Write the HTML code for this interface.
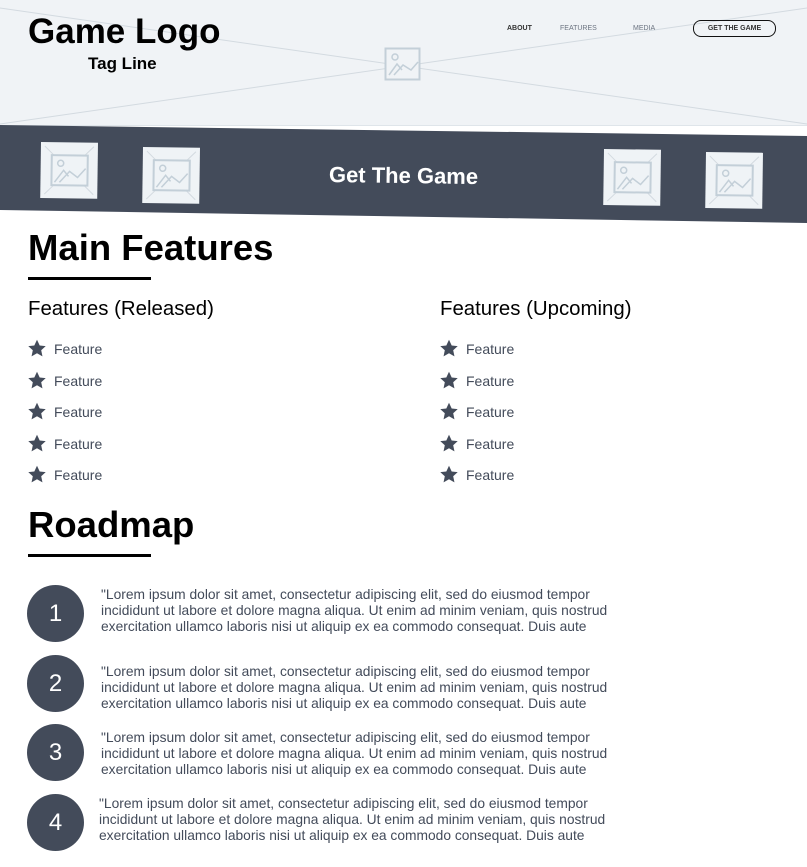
<!DOCTYPE html>
<html><head><meta charset="utf-8">
<style>
*{margin:0;padding:0;box-sizing:border-box}
body{width:807px;height:867px;overflow:hidden;background:#fff;font-family:"Liberation Sans",sans-serif;position:relative}
.a{position:absolute}
.hdr{left:0;top:0;width:807px;height:126px;background:#f0f3f6;border-bottom:1px solid #dfe5ea}
.nav{font-size:7px;top:25px;color:#6b7380}
.btn{left:693px;top:20px;width:83px;height:17px;border:1.5px solid #111;border-radius:8px;font-size:7px;font-weight:bold;color:#333;text-align:center;line-height:15px}
.h1{font-size:36.5px;font-weight:bold;color:#000;left:28px}
.ul{left:28px;width:123px;height:3px;background:#000}
.h2{font-size:20.4px;color:#000}
.f{font-size:14px;color:#434b5a;height:20px;line-height:20px}
.f svg{position:absolute;left:-27px;top:0px}
.c{left:27px;width:57px;height:57px;border-radius:50%;background:#434b5a;color:#fff;font-size:24px;text-align:center;line-height:57px}
.t{left:101px;font-size:13.8px;line-height:16px;color:#434b5a;width:560px;white-space:nowrap}
</style></head><body>
<div class="a hdr"></div>
<svg class="a" style="left:0;top:0" width="807" height="126"><line x1="0" y1="8" x2="807" y2="124" stroke="#d3dae0" stroke-width="1"/><line x1="807" y1="8" x2="0" y2="124" stroke="#d3dae0" stroke-width="1"/>
<rect x="385.5" y="48.5" width="34" height="31" fill="#f0f3f6" stroke="#c3cfd8" stroke-width="2"/><circle cx="395" cy="57" r="3" fill="none" stroke="#c3cfd8" stroke-width="1.5"/><polyline points="389,75 397,64 402,70" fill="none" stroke="#c3cfd8" stroke-width="1.5"/><polyline points="394,75 403,65 411,70 418,62" fill="none" stroke="#c3cfd8" stroke-width="1.5"/></svg>
<div class="a" style="left:28px;top:12px;font-size:35px;font-weight:bold;color:#000">Game Logo</div>
<div class="a" style="left:88px;top:54px;font-size:17px;font-weight:bold;color:#000">Tag Line</div>
<div class="a nav" style="left:507px;color:#333;font-weight:bold">ABOUT</div>
<div class="a nav" style="left:560px">FEATURES</div>
<div class="a nav" style="left:633px">MEDIA</div>
<div class="a btn">GET THE GAME</div>
<svg class="a" style="left:0;top:120px" width="807" height="110"><polygon points="0,5 807,16 807,103 0,90" fill="#434b5a"/></svg>
<svg class="a" style="left:0;top:0" width="807" height="230">
<defs><g id="p"><rect x="0" y="0" width="57" height="56" fill="#eff3f6"/><line x1="4" y1="4" x2="53" y2="52" stroke="#d3dae0"/><line x1="53" y1="4" x2="4" y2="52" stroke="#d3dae0"/><rect x="11" y="13" width="36" height="30" fill="#eff3f6" stroke="#c3cfd8" stroke-width="2"/><circle cx="20" cy="21" r="3" fill="none" stroke="#c3cfd8" stroke-width="1.5"/><polyline points="14,40 23,28 28,34" fill="none" stroke="#c3cfd8" stroke-width="1.5"/><polyline points="19,40 29,29 37,35 45,26" fill="none" stroke="#c3cfd8" stroke-width="1.5"/></g></defs>
<use href="#p" transform="translate(41,142) rotate(0.8)"/>
<use href="#p" transform="translate(143,147) rotate(0.8)"/>
<use href="#p" transform="translate(604,149) rotate(0.8)"/>
<use href="#p" transform="translate(706,152) rotate(0.8)"/>
</svg>
<div class="a" style="left:0;width:807px;top:163px;text-align:center;font-size:22px;font-weight:bold;color:#fff;transform:rotate(0.8deg)">Get The Game</div>
<div class="a h1" style="top:227px">Main Features</div>
<div class="a ul" style="top:277px"></div>
<div class="a h2" style="left:28px;top:298px">Features (Released)</div>
<div class="a h2" style="left:440px;top:298px">Features (Upcoming)</div>
<div class="a" style="left:54px;top:339px">
<div class="a f" style="top:0"><svg width="20" height="19" viewBox="0 0 24 24"><path d="M12 1l3.4 7.2 7.6.8-5.7 5.2 1.6 7.8L12 18l-6.9 4 1.6-7.8L1 9l7.6-.8z" fill="#434b5a"/></svg>Feature</div>
<div class="a f" style="top:32px"><svg width="20" height="19" viewBox="0 0 24 24"><path d="M12 1l3.4 7.2 7.6.8-5.7 5.2 1.6 7.8L12 18l-6.9 4 1.6-7.8L1 9l7.6-.8z" fill="#434b5a"/></svg>Feature</div>
<div class="a f" style="top:63px"><svg width="20" height="19" viewBox="0 0 24 24"><path d="M12 1l3.4 7.2 7.6.8-5.7 5.2 1.6 7.8L12 18l-6.9 4 1.6-7.8L1 9l7.6-.8z" fill="#434b5a"/></svg>Feature</div>
<div class="a f" style="top:95px"><svg width="20" height="19" viewBox="0 0 24 24"><path d="M12 1l3.4 7.2 7.6.8-5.7 5.2 1.6 7.8L12 18l-6.9 4 1.6-7.8L1 9l7.6-.8z" fill="#434b5a"/></svg>Feature</div>
<div class="a f" style="top:126px"><svg width="20" height="19" viewBox="0 0 24 24"><path d="M12 1l3.4 7.2 7.6.8-5.7 5.2 1.6 7.8L12 18l-6.9 4 1.6-7.8L1 9l7.6-.8z" fill="#434b5a"/></svg>Feature</div>
</div>
<div class="a" style="left:466px;top:339px">
<div class="a f" style="top:0"><svg width="20" height="19" viewBox="0 0 24 24"><path d="M12 1l3.4 7.2 7.6.8-5.7 5.2 1.6 7.8L12 18l-6.9 4 1.6-7.8L1 9l7.6-.8z" fill="#434b5a"/></svg>Feature</div>
<div class="a f" style="top:32px"><svg width="20" height="19" viewBox="0 0 24 24"><path d="M12 1l3.4 7.2 7.6.8-5.7 5.2 1.6 7.8L12 18l-6.9 4 1.6-7.8L1 9l7.6-.8z" fill="#434b5a"/></svg>Feature</div>
<div class="a f" style="top:63px"><svg width="20" height="19" viewBox="0 0 24 24"><path d="M12 1l3.4 7.2 7.6.8-5.7 5.2 1.6 7.8L12 18l-6.9 4 1.6-7.8L1 9l7.6-.8z" fill="#434b5a"/></svg>Feature</div>
<div class="a f" style="top:95px"><svg width="20" height="19" viewBox="0 0 24 24"><path d="M12 1l3.4 7.2 7.6.8-5.7 5.2 1.6 7.8L12 18l-6.9 4 1.6-7.8L1 9l7.6-.8z" fill="#434b5a"/></svg>Feature</div>
<div class="a f" style="top:126px"><svg width="20" height="19" viewBox="0 0 24 24"><path d="M12 1l3.4 7.2 7.6.8-5.7 5.2 1.6 7.8L12 18l-6.9 4 1.6-7.8L1 9l7.6-.8z" fill="#434b5a"/></svg>Feature</div>
</div>
<div class="a h1" style="top:504px">Roadmap</div>
<div class="a ul" style="top:554px"></div>
<div class="a c" style="top:585px">1</div>
<div class="a c" style="top:655px">2</div>
<div class="a c" style="top:724px">3</div>
<div class="a c" style="top:794px">4</div>
<div class="a t" style="top:587px">"Lorem ipsum dolor sit amet, consectetur adipiscing elit, sed do eiusmod tempor<br>incididunt ut labore et dolore magna aliqua. Ut enim ad minim veniam, quis nostrud<br>exercitation ullamco laboris nisi ut aliquip ex ea commodo consequat. Duis aute</div>
<div class="a t" style="top:664px">"Lorem ipsum dolor sit amet, consectetur adipiscing elit, sed do eiusmod tempor<br>incididunt ut labore et dolore magna aliqua. Ut enim ad minim veniam, quis nostrud<br>exercitation ullamco laboris nisi ut aliquip ex ea commodo consequat. Duis aute</div>
<div class="a t" style="top:730px">"Lorem ipsum dolor sit amet, consectetur adipiscing elit, sed do eiusmod tempor<br>incididunt ut labore et dolore magna aliqua. Ut enim ad minim veniam, quis nostrud<br>exercitation ullamco laboris nisi ut aliquip ex ea commodo consequat. Duis aute</div>
<div class="a t" style="top:796px;left:99px">"Lorem ipsum dolor sit amet, consectetur adipiscing elit, sed do eiusmod tempor<br>incididunt ut labore et dolore magna aliqua. Ut enim ad minim veniam, quis nostrud<br>exercitation ullamco laboris nisi ut aliquip ex ea commodo consequat. Duis aute</div>
</body></html>
